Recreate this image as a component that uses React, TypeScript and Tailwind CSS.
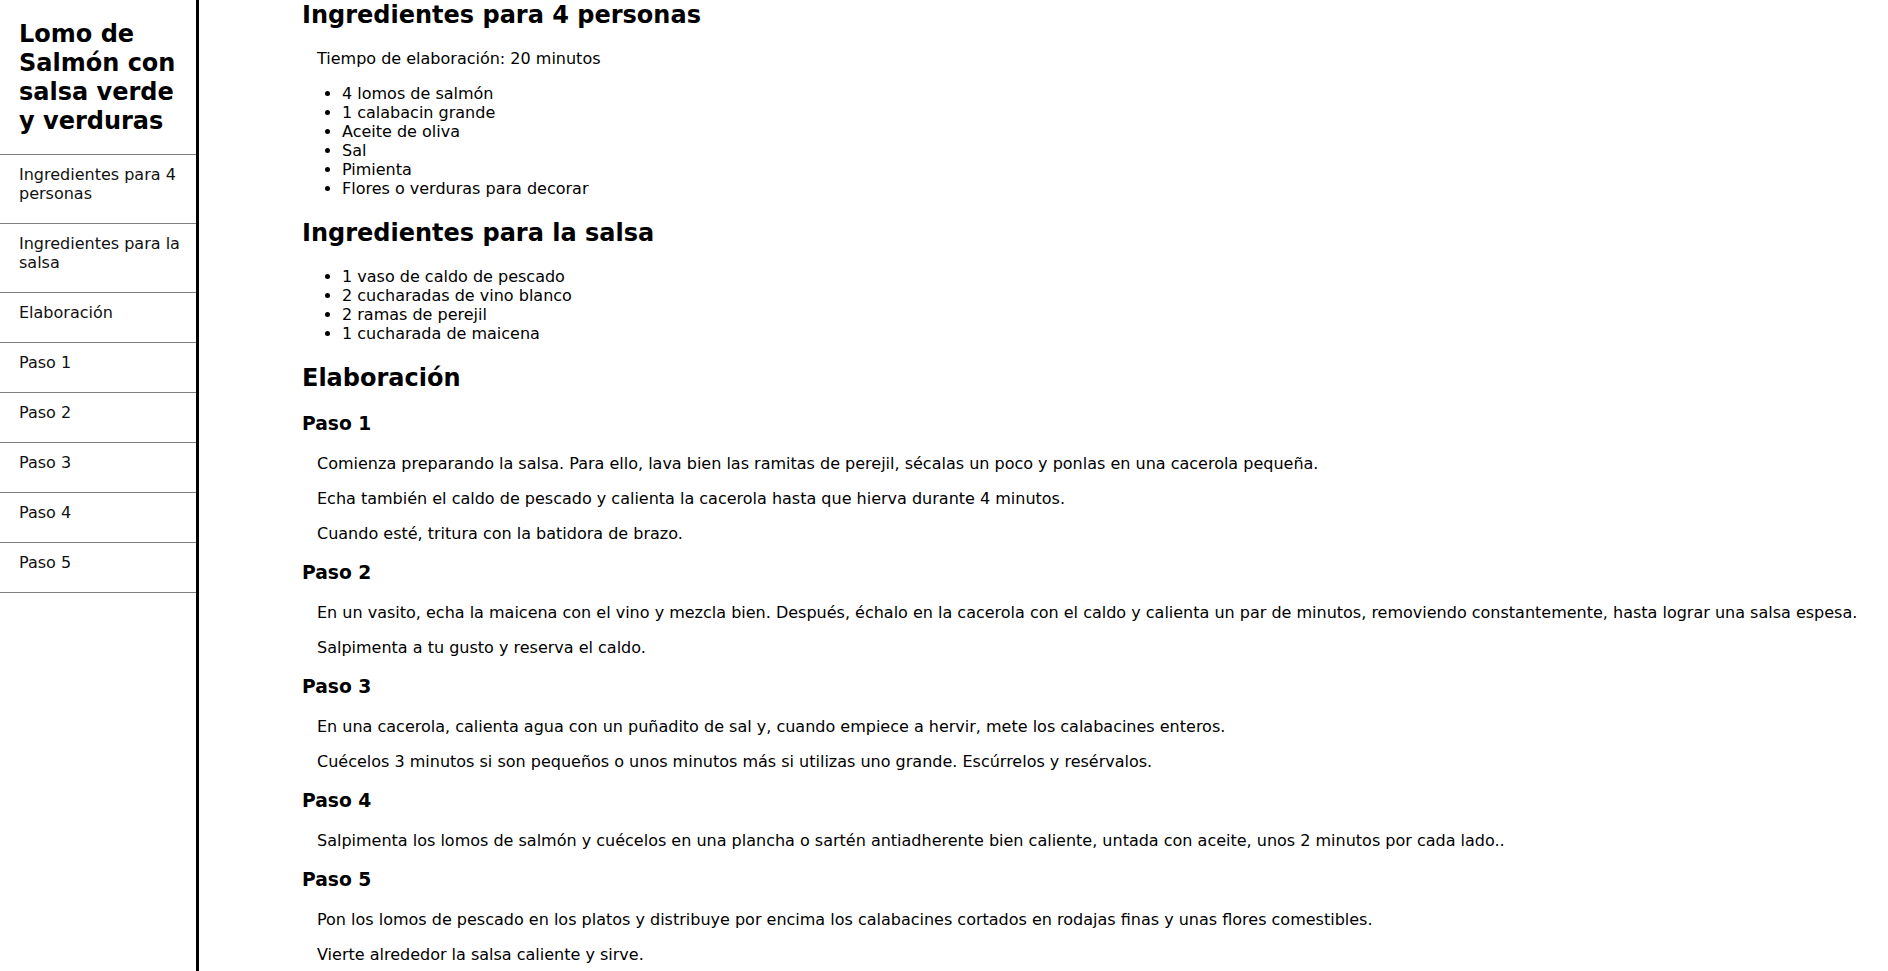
import React from "react";

const navItems = [
  "Ingredientes para 4 personas",
  "Ingredientes para la salsa",
  "Elaboración",
  "Paso 1",
  "Paso 2",
  "Paso 3",
  "Paso 4",
  "Paso 5",
];

const steps: { title: string; paras: string[] }[] = [
  {
    title: "Paso 1",
    paras: [
      "Comienza preparando la salsa. Para ello, lava bien las ramitas de perejil, sécalas un poco y ponlas en una cacerola pequeña.",
      "Echa también el caldo de pescado y calienta la cacerola hasta que hierva durante 4 minutos.",
      "Cuando esté, tritura con la batidora de brazo.",
    ],
  },
  {
    title: "Paso 2",
    paras: [
      "En un vasito, echa la maicena con el vino y mezcla bien. Después, échalo en la cacerola con el caldo y calienta un par de minutos, removiendo constantemente, hasta lograr una salsa espesa.",
      "Salpimenta a tu gusto y reserva el caldo.",
    ],
  },
  {
    title: "Paso 3",
    paras: [
      "En una cacerola, calienta agua con un puñadito de sal y, cuando empiece a hervir, mete los calabacines enteros.",
      "Cuécelos 3 minutos si son pequeños o unos minutos más si utilizas uno grande. Escúrrelos y resérvalos.",
    ],
  },
  {
    title: "Paso 4",
    paras: [
      "Salpimenta los lomos de salmón y cuécelos en una plancha o sartén antiadherente bien caliente, untada con aceite, unos 2 minutos por cada lado..",
    ],
  },
  {
    title: "Paso 5",
    paras: [
      "Pon los lomos de pescado en los platos y distribuye por encima los calabacines cortados en rodajas finas y unas flores comestibles.",
      "Vierte alrededor la salsa caliente y sirve.",
    ],
  },
];

function P({ children }: { children: React.ReactNode }) {
  return <p className="my-4 pl-[15px] text-[16px] leading-[19px] whitespace-nowrap">{children}</p>;
}

export default function App() {
  return (
    <div className="flex h-screen overflow-hidden bg-white text-black font-['DejaVu_Sans',Verdana,sans-serif]">
      <aside className="w-[199px] shrink-0 border-r-[3px] border-black">
        <h1 className="pt-[20px] pb-[18px] pl-[19px] text-[24px] leading-[29px] font-bold whitespace-nowrap">
          Lomo de
          <br />
          Salmón con
          <br />
          salsa verde
          <br />
          y verduras
        </h1>
        <nav>
          {navItems.map((item) => (
            <a
              key={item}
              href="#"
              className="block border-t border-[#808080] pt-[10px] pb-[20px] pl-[19px] pr-[5px] text-[16px] leading-[19px] text-[#111]"
            >
              {item}
            </a>
          ))}
          <div className="border-t border-[#808080]" />
        </nav>
      </aside>
      <main className="flex-1 pl-[103px]">
        <h2 className="mt-0 pt-[1px] mb-[19px] text-[24px] leading-[29px] font-bold">Ingredientes para 4 personas</h2>
        <P>Tiempo de elaboración: 20 minutos</P>
        <ul className="my-4 pl-10 list-disc text-[16px] leading-[19px]">
          <li>4 lomos de salmón</li>
          <li>1 calabacin grande</li>
          <li>Aceite de oliva</li>
          <li>Sal</li>
          <li>Pimienta</li>
          <li>Flores o verduras para decorar</li>
        </ul>
        <h2 className="mt-[20px] pt-[1px] mb-[19px] text-[24px] leading-[29px] font-bold">Ingredientes para la salsa</h2>
        <ul className="my-4 pl-10 list-disc text-[16px] leading-[19px]">
          <li>1 vaso de caldo de pescado</li>
          <li>2 cucharadas de vino blanco</li>
          <li>2 ramas de perejil</li>
          <li>1 cucharada de maicena</li>
        </ul>
        <h2 className="mt-[20px] pt-[1px] mb-[19px] text-[24px] leading-[29px] font-bold">Elaboración</h2>
        {steps.map((s) => (
          <section key={s.title}>
            <h3 className="my-[18.5px] text-[18.72px] leading-[23px] font-bold">{s.title}</h3>
            {s.paras.map((p) => (
              <P key={p}>{p}</P>
            ))}
          </section>
        ))}
      </main>
    </div>
  );
}
